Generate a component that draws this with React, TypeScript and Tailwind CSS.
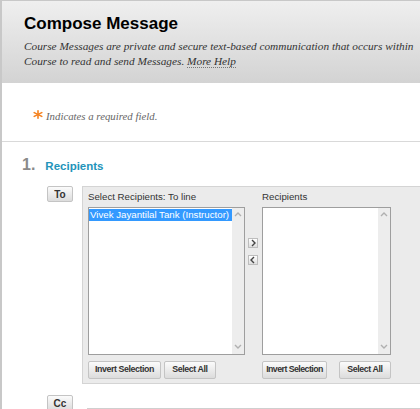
import React from 'react';

const sans = "font-['Liberation_Sans',Arial,sans-serif]";
const serif = "font-['Liberation_Serif','Times_New_Roman',serif]";

const GrayButton = ({ label, className = '' }: { label: string; className?: string }) => (
    <div
        className={`flex shrink-0 items-center justify-center whitespace-nowrap rounded-[2px] border border-[#c4c4c4] bg-gradient-to-b from-[#fbfbfb] to-[#dcdcdc] text-[#333] font-bold ${className}`}
    >
        {label}
    </div>
);

const Chevron = ({ dir }: { dir: 'up' | 'down' | 'left' | 'right' }) => {
    const d = {
        up: 'M1 5 L4 2 L7 5',
        down: 'M1 2 L4 5 L7 2',
        left: 'M5 1 L2 4 L5 7',
        right: 'M3 1 L6 4 L3 7',
    }[dir];
    return (
        <svg width="8" height="8" viewBox="0 0 8 8" fill="none">
            <path d={d} stroke="currentColor" strokeWidth="1.4" />
        </svg>
    );
};

const ListBox = ({ items }: { items: string[] }) => (
    <div className="flex h-[148px] border border-[#9e9e9e] bg-white">
        <div className="min-w-0 flex-1 pt-[1px]">
            {items.map((item) => (
                <div key={item} className="h-[12px] overflow-hidden whitespace-nowrap bg-[#3399ff] pl-[1px] text-[9.7px] leading-[12px] text-white">
                    {item}
                </div>
            ))}
        </div>
        <div className="flex w-[12px] shrink-0 flex-col items-center justify-between bg-[#ededed] py-[3px] text-[#b0b0b0]">
            <Chevron dir="up" />
            <Chevron dir="down" />
        </div>
    </div>
);

export default function App() {
    return (
        <div className={`relative h-[409px] w-[420px] overflow-hidden bg-white ${sans}`}>
            <div className="h-full border-l-2 border-t border-[#c8c8c8]">
                {/* Header */}
                <div className="h-[82px] bg-gradient-to-b from-[#efefef] to-[#d3d3d3] pl-[22px] pt-[13px]">
                    <h1 className="text-[17px] font-bold leading-[20px] text-black">Compose Message</h1>
                    <p className={`mt-[5px] whitespace-nowrap text-[11.3px] italic leading-[14.5px] text-[#333] ${serif}`}>
                        Course Messages are private and secure text-based communication that occurs within
                        <br />
                        Course to read and send Messages.{' '}
                        <span className="border-b border-dotted border-[#777]">More Help</span>
                    </p>
                </div>

                {/* Required note */}
                <div className="mt-[27px] flex h-[12px] items-center pl-[31px]">
                    <svg width="10" height="9" viewBox="0 0 10 9" className="-mt-[4px]">
                        <g stroke="#f5821f" strokeWidth="1.6" strokeLinecap="round">
                            <path d="M5 0.8 V8.2" />
                            <path d="M1.2 2.6 L8.8 6.4" />
                            <path d="M1.2 6.4 L8.8 2.6" />
                        </g>
                    </svg>
                    <span className={`ml-[3px] text-[10.8px] italic text-[#666] ${serif}`}>Indicates a required field.</span>
                </div>

                <div className="mt-[19px] border-t border-[#d9d9d9]" />

                {/* Section heading */}
                <div className="flex items-baseline pl-[20px] pt-[13px] leading-[20px]">
                    <span className="text-[16px] font-bold text-[#8a8a8a]">1.</span>
                    <span className="ml-[10px] text-[11.5px] font-bold text-[#2394ba]">Recipients</span>
                </div>

                {/* To row */}
                <div className="mt-[10px] flex pl-[45px]">
                    <GrayButton label="To" className="h-[16px] w-[26px] text-[10px]" />
                    <div className="ml-[9px] w-[380px] shrink-0 border border-[#d4d4d4] bg-[#ebebeb] pb-[4px] pl-[5px]">
                        <div className="flex text-[9.7px] text-[#333]">
                            <div className="w-[157px] shrink-0">
                                <div className="h-[20px] leading-[20px]">Select Recipients: To line</div>
                                <ListBox items={['Vivek Jayantilal Tank (Instructor)']} />
                                <div className="mt-[6px] flex">
                                    <GrayButton label="Invert Selection" className="h-[18px] w-[73px] text-[8.8px] tracking-[-0.4px]" />
                                    <GrayButton label="Select All" className="ml-[3px] h-[18px] w-[52px] text-[8.8px] tracking-[-0.4px]" />
                                </div>
                            </div>
                            <div className="flex w-[17px] shrink-0 flex-col pl-[3px] pt-[51px]">
                                <div className="flex h-[10px] w-[10px] items-center justify-center border border-[#bdbdbd] bg-gradient-to-b from-white to-[#dedede] text-[#444]">
                                    <Chevron dir="right" />
                                </div>
                                <div className="mt-[7px] flex h-[10px] w-[10px] items-center justify-center border border-[#bdbdbd] bg-gradient-to-b from-white to-[#dedede] text-[#444]">
                                    <Chevron dir="left" />
                                </div>
                            </div>
                            <div className="w-[129px] shrink-0">
                                <div className="h-[20px] leading-[20px]">Recipients</div>
                                <ListBox items={[]} />
                                <div className="mt-[6px] flex">
                                    <GrayButton label="Invert Selection" className="h-[18px] w-[65px] text-[8.8px] tracking-[-0.55px]" />
                                    <GrayButton label="Select All" className="ml-[12px] h-[18px] w-[52px] text-[8.8px] tracking-[-0.4px]" />
                                </div>
                            </div>
                        </div>
                    </div>
                </div>

                {/* Cc row */}
                <div className="mt-[11px] flex pl-[45px]">
                    <GrayButton label="Cc" className="h-[16px] w-[26px] text-[10px]" />
                    <div className="ml-[14px] mt-[13px] flex h-[4px] w-[340px] shrink-0 border-t border-[#cfcfcf]">
                        <div className="w-[41px] border-x border-[#cfcfcf]" />
                        <div className="ml-[1px] w-[36px] border-x border-[#cfcfcf]" />
                        <div className="ml-[5px] w-[42px] border-x border-[#cfcfcf]" />
                        <div className="ml-[2px] w-[41px] border-x border-[#cfcfcf]" />
                    </div>
                </div>
            </div>
        </div>
    );
}
